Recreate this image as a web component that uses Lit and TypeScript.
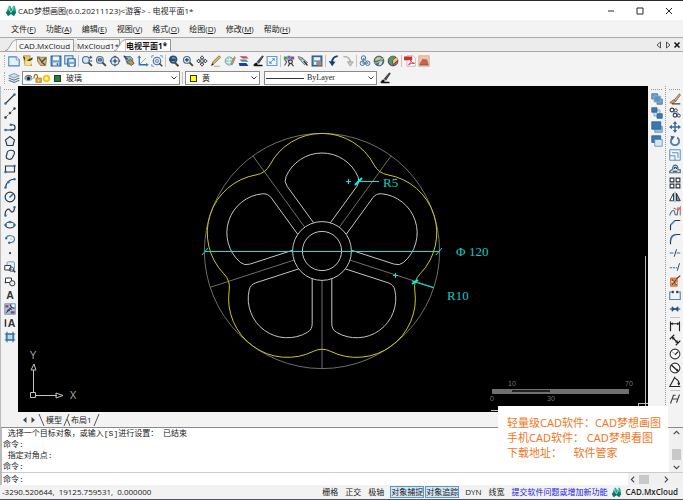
import { LitElement, html, css, svg } from "lit";
import { customElement, property, state } from "lit/decorators.js";
import { classMap } from "lit/directives/class-map.js";

const DARK = "#2b3644";
const BLUE = "#2f6f9f";

const glass = (mark: unknown) => svg`
  <path d="M10 10l4.500 4.500" stroke="#4a4238" stroke-width="2.400"/>
  <circle cx="6.500" cy="6.500" r="4.500" fill="#d5e7f5" stroke="#4d6f91" stroke-width="1.500"/>${mark}`;

const ICONS: Record<string, unknown> = {
  newFile: svg`<path d="M1 2.500h10l4 4v8H1z" fill="#e3f0fa" stroke="#4a86b8" stroke-width="1.400"/><path d="M11 2.500v4h4" fill="#fff" stroke="#4a86b8"/>`,
  open: svg`<path d="M2 1h9l-1 5 3 8H4z" fill="#e8c766" stroke="#b78b2c"/><path d="M1 2l3 1v5zM7 7l7-4v3l-5 3z" fill="#47402f"/><path d="M5 8h8l-2 6H4z" fill="#f7df96"/>`,
  openCloud: svg`<path d="M2 3h12l-1 11H6L2 8z" fill="#d9b671" stroke="#8b6a35"/><path d="M4 4l4 5 5-5M7 9l5 4" stroke="#3b4a58" stroke-width="1.600"/><path d="M1 2l4 0-3 4z" fill="#4e7894"/>`,
  save: svg`<path d="M1.500 1.500h13v13h-13z" fill="#6fa3cc" stroke="#2f6693" stroke-width="1.500"/><path d="M4 2h8v5H4z" fill="#eef6fc"/><path d="M4 10h8v4H4z" fill="#dcebf7"/><path d="M9 11h2v3H9z" fill="#2f6693"/>`,
  saveAs: svg`<path d="M1 1h11v11H1z" fill="#cfe2f2" stroke="#3f78a8" stroke-width="1.400"/><path d="M5 5h10v10H5z" fill="#7fb0d6" stroke="#2f6693" stroke-width="1.300"/><path d="M7 6h6v3H7zM8 12h5v3H8z" fill="#f3f9fd"/>`,
  zoomRealtime: svg`${glass(svg`<path d="M4.500 6.500h4M6.500 4.500v4"/>`)}<path d="M11 3h4M13 1v4M11 8h4" stroke="${DARK}" stroke-width="1.200"/>`,
  zoomWindow: glass(svg`<path d="M4.500 5h4v3h-4z" fill="#7ba6c9" stroke="${DARK}"/>`),
  zoomAll: svg`<circle cx="8" cy="8" r="5.500" fill="#d9e8f4" stroke="#46617b" stroke-width="1.600"/><path d="M5 8h6M8 5v6M8 1v2M8 13v2M1 8h2M13 8h2" stroke="${DARK}" stroke-width="1.500"/>`,
  zoomPrev: svg`<path d="M2 2h8l3 3v7H6z" fill="#8ab0cc" stroke="#46617b"/><path d="M5 9l6 5 4-3-5-5z" fill="#b5925e" stroke="#5d4c31"/><path d="M1 1l5 5" stroke="${DARK}" stroke-width="1.500"/>`,
  ucs: svg`<path d="M3 2v11h11" stroke="${BLUE}" stroke-width="1.700"/><path d="M3 13L12 4" stroke="#7096b5"/><path d="M1 4l2-3 2 3M12 11l3 2-3 2" stroke="${BLUE}"/>`,
  zoomExtents: svg`<path d="M1 4V1h3M12 1h3v3M1 12v3h3" stroke="#5a87ad"/><circle cx="8" cy="8" r="5" fill="#d5e7f5" stroke="#4d6f91" stroke-width="1.500"/><circle cx="8" cy="8" r="2" stroke="#4d6f91"/><path d="M11 11l4 4" stroke="#4a4238" stroke-width="2"/>`,
  zoomBack: svg`<path d="M9 10l5 5" stroke="#4a4238" stroke-width="2.400"/><circle cx="7" cy="6" r="4.500" fill="#6f9abf" stroke="#2b4f70" stroke-width="2"/><path d="M1 6l4-4v3h5v3H5v3z" fill="#234b6d" stroke="none"/>`,
  zoomIn: glass(svg`<path d="M4 6.500h5M6.500 4v5" stroke="${DARK}" stroke-width="1.500"/>`),
  pan: svg`<path d="M8 1l2.500 3H9v3h3V5.500L15 8l-3 2.500V9H9v3h1.500L8 15l-2.500-3H7V9H4v1.500L1 8l3-2.500V7h3V4H5.500z" fill="#fff" stroke="${DARK}" stroke-width="1.200"/>`,
  pencil: svg`<path d="M2 14l2-5 8-8 2 2-8 8z" fill="#e5bb62" stroke="#755624"/><path d="M2 14l1-3 2 2z" fill="#222"/><path d="M5 15h8" stroke="#9a8c70"/>`,
  globeEdit: svg`<circle cx="7" cy="8" r="5.500" fill="#a7d0cf" stroke="#5e98a0"/><path d="M3 6h8M3 10h8M7 3v10" stroke="#e7f5f4"/><path d="M9 12l5-10 1 2-4 9z" fill="#c7a46a" stroke="#8e8070"/>`,
  layers3: svg`<path d="M2 1.500h9l3 3H6z" fill="#e0404a"/><path d="M2 6h9l3 3H5z" fill="#3f8fd0"/><path d="M1 10.500h10l3 4H2z" fill="#1f3f9c"/>`,
  brush: svg`<path d="M7 9l7-8 1 1-6 9z" fill="#555" stroke="#222"/><path d="M1 14c2-1 3-4 5-4l2 2c-1 2-4 2-7 2z" fill="#111"/><path d="M3 14h11" stroke="#111" stroke-width="2"/>`,
  viewport: svg`<path d="M1.500 2h13v12h-13z" fill="#eef7fd" stroke="#5f9dca" stroke-width="1.500"/><path d="M5 11l6-6M8 5h3v3M5 8v3h3" stroke="#3f79a8"/>`,
  find: svg`<path d="M1 2h5v4H1z" fill="#4a9a55"/><path d="M6 1h4v4H6z" fill="#5c70c0"/><path d="M10 2h5v4h-5z" fill="#8d4f93"/><path d="M2 6l3 3-3 5M6 6l4 3" stroke="#704a86" stroke-width="1.500"/><circle cx="10" cy="9" r="2.500" fill="#d8e4ee" stroke="#333" stroke-width="1.500"/><path d="M9 11l-2 4M11 11l3 4" stroke="#333" stroke-width="1.600"/>`,
  filter: svg`<path d="M1 2l6 2 3 5" stroke="#6c7f8f" stroke-width="1.500"/><path d="M4 6l6 7 4-3-6-5z" fill="#c3ced6" stroke="#4f5f6b"/><path d="M9 8l5 6" stroke="#333" stroke-width="1.600"/><path d="M2 3l2 3" stroke="#b08a5a" stroke-width="2"/>`,
  calc: svg`<path d="M1.500 1.500h13v13h-13z" fill="#6a97c0" stroke="#2c4d6c" stroke-width="1.400"/><path d="M4 3h8v4H4z" fill="#e8f2fa"/><path d="M4 9h3v4H4z" fill="#e8f2fa"/><path d="M9 9h5v5H9z" fill="#b98955"/>`,
  undo: svg`<path d="M13 1.500C8 2 5.500 5 5.500 10" stroke="#173f70" stroke-width="2.600"/><path d="M1 8l4.500 7L10 9z" fill="#173f70"/>`,
  redo: svg`<path d="M2 2c6 0 9 3 9 8" stroke="#b0b0b0" stroke-width="2"/><path d="M7 9l4 6 4-6z" fill="#c4c4c4" stroke="#a0a0a0"/>`,
  clouds: svg`<circle cx="6" cy="4" r="3" fill="#dceaf6" stroke="#4d7298" stroke-width="1.300"/><circle cx="4.500" cy="11" r="3" fill="#dceaf6" stroke="#4d7298" stroke-width="1.300"/><circle cx="11.500" cy="11" r="3" fill="#dceaf6" stroke="#4d7298" stroke-width="1.300"/><path d="M6 4l6 7H5z" stroke="#4d7298"/>`,
  globe: svg`<circle cx="8" cy="8" r="6.500" fill="#3d6f9e" stroke="#34454f"/><path d="M3 5c4-4 8-2 9 0l-5 2-4 1z" fill="#c8c98b"/><path d="M9 9l4-1-2 5-4 1z" fill="#d7dfd0"/><path d="M1 11c5 0 10-3 14-8" stroke="#e0c560" stroke-width="1.500"/>`,
  globeDown: svg`<circle cx="8" cy="8" r="6.500" fill="#4b3d62" stroke="#413343"/><path d="M2 5c3-4 8-4 9-2L7 8l1 6c-4 0-6-4-6-9z" fill="#5b9662"/><path d="M14 2L8 7v5l6-5z" fill="#e8d06c"/><path d="M9 13l5-3" stroke="#c4525b" stroke-width="2"/>`,
  pdf: svg`<path d="M4 1h8l3 3v11H4z" fill="#fff" stroke="#b9a6a6"/><path d="M0 2h11v5H0z" fill="#d02c32"/><path d="M6 13c3-2 4-4 3-6 1 3 3 4 5 4-3 0-5 0-8 2z" stroke="#d02c32" stroke-width="1.200"/>`,
  image: svg`<path d="M1 1h14v14H1z" fill="#efc4ae" stroke="#d4a694"/><path d="M2 12l4-7 6 1 2 6z" fill="#c4664c"/><path d="M2 13h12" stroke="#8a4a3c" stroke-width="1.500"/>`,
  layerStack: svg`<path d="M1 5l7-3 7 3-7 3z" fill="#cfe0ee" stroke="#6488a8"/><path d="M1 8l7 3 7-3M1 11l7 3 7-3" stroke="#4c789c" stroke-width="1.500"/>`,
  line: svg`<path d="M2 14L14 2" stroke="${DARK}" stroke-width="1.500"/><path d="M1 13h2v2H1zM13 1h2v2h-2z" fill="${BLUE}" stroke="${BLUE}"/>`,
  xline: svg`<path d="M2 14L14 2" stroke="#666" stroke-width="1.200" stroke-dasharray="5 1"/><path d="M1 13h2v2H1zM7 7h2v2H7zM13 1h2v2h-2z" fill="${DARK}" stroke="${DARK}"/>`,
  polyline: svg`<path d="M2 12h9c5 0 5-7 0-7H9" stroke="${DARK}" stroke-width="1.500"/><path d="M1 11h2v2H1zM9 11h2v2H9zM8 4h2v2H8z" fill="${BLUE}" stroke="${BLUE}"/>`,
  polygon: svg`<path d="M8 2l6 4.500-2 7.500H4L2 6.500z" fill="#e5eef5" stroke="${DARK}" stroke-width="1.500"/>`,
  revcloud: svg`<path d="M4 6c0-5 10-6 10-1 0 3-2 4-3 7-2 3-8 2-8-2 0-2 1-2 1-4z" fill="#f0f4f7" stroke="${DARK}" stroke-width="1.500"/>`,
  rect: svg`<path d="M2 4h12v8H2z" fill="#eef4f9" stroke="${DARK}" stroke-width="1.500"/><path d="M1 11h2v2H1zM13 3h2v2h-2z" fill="${BLUE}" stroke="${BLUE}"/>`,
  arc: svg`<path d="M2 14C3 8 7 3 14 3" stroke="${DARK}" stroke-width="1.500"/><path d="M1 13h2v2H1zM5 6h2v2H5zM13 2h2v2h-2z" fill="${BLUE}" stroke="${BLUE}"/>`,
  circle: svg`<circle cx="8" cy="8" r="6.500" fill="#edf4f9" stroke="${DARK}" stroke-width="1.600"/><path d="M8 8l4-4M7 8h2" stroke="${BLUE}" stroke-width="2"/>`,
  spline: svg`<path d="M2 14C0 8 6 3 8 7s6 3 6-4" stroke="${DARK}" stroke-width="1.500"/><path d="M1 13h2v2H1zM13 2h2v2h-2z" fill="${BLUE}" stroke="${BLUE}"/>`,
  ellipse: svg`<ellipse cx="8" cy="8" rx="6" ry="4" fill="#edf4f9" stroke="${DARK}" stroke-width="1.600"/><path d="M1 7h2v2H1zM13 7h2v2h-2zM7 3h2v2H7z" fill="${BLUE}" stroke="${BLUE}"/>`,
  ellipseArc: svg`<path d="M3 6c2-4 11-3 11 2 0 4-4 5-7 5" stroke="#587e9d" stroke-width="1.600"/><path d="M2 6h2v2H2zM6 12h2v2H6z" fill="${BLUE}" stroke="${BLUE}"/><path d="M8 8h3" stroke="#90aabd"/>`,
  point: svg`<circle cx="8" cy="8" r="1.500" fill="${DARK}"/>`,
  insert: svg`<rect x="4" y="1" width="10" height="11" rx="2" fill="#e1edf6" stroke="#57829f"/><path d="M1 6h8v6H1z" fill="#fff" stroke="${DARK}" stroke-width="1.300"/><circle cx="10" cy="11" r="3" stroke="${DARK}"/><path d="M12 12l3 3" stroke="${DARK}" stroke-width="2"/>`,
  block: svg`<path d="M2 4h8v6H2z" fill="#fff" stroke="${DARK}" stroke-width="1.300"/><circle cx="11" cy="11" r="3.500" fill="#eee" stroke="${DARK}" stroke-width="1.300"/><path d="M1 9h2v2H1z" fill="${DARK}"/>`,
  hatch: svg`<path d="M1 1h14v14H1z" fill="#adc5df" stroke="#637fa1"/><path d="M2 3h4v3H2zM4 9h4v2H4zM9 11h5v3H9z" fill="#963f5b"/><path d="M8 2l2 4 4 1M3 13l5-6 2 2" stroke="#263b55" stroke-width="1.500"/><path d="M11 2h3v3h-3z" fill="#fff"/>`,
  region: svg`<path d="M3 4h10v8H3z" fill="#bcd9ec" stroke="${BLUE}" stroke-width="1.300"/><path d="M4 1v14M12 1v14M1 4h14M1 12h14" stroke="${BLUE}" stroke-width="1.500"/>`,
  front: svg`<path d="M1 1h8v7H1z" fill="#6f9fc8" stroke="#3d6f9e"/><path d="M8 8h7v7H8z" fill="#6f9fc8" stroke="#3d6f9e"/><path d="M4 4h9v8H4z" fill="#5f94c2" stroke="#8fb4d4"/>`,
  back: svg`<path d="M4 4h8v8H4z" fill="#d2e5f5" stroke="#6e98bd"/><path d="M1 1h7v6H1zM8 9h7v6H8z" fill="#3f79aa" stroke="#2f5f8b"/>`,
  above: svg`<path d="M5 7h10v8H5z" fill="#9bc3e3" stroke="#5584ae"/><path d="M1 1h12v10H1z" fill="#3b78ad" stroke="#2b5f8e"/>`,
  below: svg`<path d="M1 1h12v9H1z" fill="#3b78ad" stroke="#2b5f8e"/><path d="M5 6h10v9H5z" fill="#d4e7f6" stroke="#5584ae"/>`,
  erase: svg`<path d="M7 9l7-8 1 2-6 8z" fill="#ddb47a" stroke="#695235"/><path d="M1 13l5-4 3 2-4 3z" fill="#d39a62" stroke="#8d5a35"/><path d="M4 14.500h11" stroke="#333" stroke-width="1.500"/>`,
  copy: svg`<circle cx="4" cy="4" r="2.500" fill="#fff" stroke="${DARK}" stroke-width="1.400"/><circle cx="9" cy="4.500" r="2" stroke="${DARK}" stroke-width="1.200"/><circle cx="8" cy="11" r="2.500" fill="#fff" stroke="${DARK}" stroke-width="1.400"/><circle cx="13" cy="11.500" r="2" stroke="${DARK}" stroke-width="1.200"/><path d="M5 6l4 3M10 6l3 4" stroke="${BLUE}"/>`,
  move: svg`<path d="M8 2v12M2 8h12" stroke="#3c6c9c" stroke-width="2"/><path d="M8 0l3 4H5zM8 16l3-4H5zM0 8l4-3v6zM16 8l-4-3v6z" fill="#3c6c9c"/>`,
  rotate: svg`<path d="M5 3.500a5.500 5.500 0 1 0 6 0" stroke="#4d7fa8" stroke-width="2.400"/><path d="M2 1l6 1-4 5z" fill="#3d678b"/>`,
  scale: svg`<path d="M1 1h14v14H1z" fill="#edf5fb" stroke="#5a91bd" stroke-width="1.300"/><path d="M1 9h7v6M4 5h8v7" stroke="#5a91bd" stroke-width="1.300"/>`,
  offset: svg`<path d="M1 13h14V9h-3C13 1 4 1 5 8L1 11z" fill="#d9e7f1" stroke="#426b8b" stroke-width="1.600"/><path d="M5 11h6M7 8c0-3 3-3 3 0" stroke="${DARK}" stroke-width="1.400"/>`,
  array: svg`<path d="M1.500 1.500h5v5h-5zM9.500 1.500h5v5h-5zM1.500 9.500h5v5h-5zM9.500 9.500h5v5h-5z" fill="#fff" stroke="${DARK}" stroke-width="1.500"/>`,
  mirror: svg`<path d="M6 3v10H1z" fill="#fff" stroke="${DARK}" stroke-width="1.300"/><path d="M10 3v10h5z" fill="#7897ad" stroke="${DARK}" stroke-width="1.300"/><path d="M8 1v14" stroke="${BLUE}"/>`,
  stretch: svg`<path d="M1 14c1-5 4-8 6-6 2 3-1 6 4 5l1-10" stroke="#4e6fa3" stroke-width="1.500"/><path d="M6 4l4 2M12 7l3-4v11" stroke="#d4604e" stroke-width="1.500"/>`,
  chamfer: svg`<path d="M2 15V8l6-6h7" stroke="${DARK}" stroke-width="1.500"/><path d="M2 8l6-6" stroke="#4e93c4" stroke-width="2.200"/>`,
  fillet: svg`<path d="M2 15v-4C2 5 6 2 10 2h5" stroke="${DARK}" stroke-width="1.500"/><path d="M2 11C2 5 6 2 10 2" stroke="#4277a2" stroke-width="2.200"/>`,
  trim: svg`<path d="M1 8h6M10 8h5" stroke="#3575a9" stroke-width="1.500" stroke-dasharray="5 1"/><path d="M7 13l3-10" stroke="${DARK}" stroke-width="1.200"/>`,
  extend: svg`<path d="M1 9h10" stroke="#3575a9" stroke-width="1.500" stroke-dasharray="3 1"/><path d="M11 13l3-10" stroke="${DARK}" stroke-width="1.200"/>`,
  explode: svg`<path d="M2 4h9v11H2z" fill="#e08a55" stroke="#c06a40"/><path d="M4 6l6 7M10 6l-6 7M10 5l5-4" stroke="#6e3426" stroke-width="1.400"/><path d="M3 8h3v2H3zM9 10h2v2H9z" fill="#ffd59b"/>`,
  breakPt: svg`<path d="M5 4H1v10h14V4h-4" stroke="#4e86b3" stroke-width="1.500"/><path d="M4 3h2v2H4zM10 3h2v2h-2z" fill="${DARK}" stroke="${DARK}"/>`,
  join: svg`<path d="M1 8h14" stroke="#285680" stroke-width="1.500"/><path d="M4 5l4 3-4 3zM12 5L8 8l4 3z" fill="#285680" stroke="#285680"/>`,
  dimLinear: svg`<path d="M2 2v13M14 2v13M2 5h12" stroke="#222" stroke-width="1.500"/><path d="M2 5l3-2v4zM14 5l-3-2v4z" fill="#222"/>`,
  dimAligned: svg`<path d="M4 4l8 8M1 7l6-6M9 15l6-6" stroke="#222" stroke-width="1.500"/><path d="M4 4l4 1-3 3zM12 12l-4-1 3-3z" fill="#222"/>`,
  dimRadius: svg`<circle cx="8" cy="8" r="6.500" fill="#fff" stroke="#333" stroke-width="1.400"/><path d="M8 9l4-4" stroke="#222" stroke-width="1.500"/><path d="M4 5l4 3" stroke="#888"/>`,
  dimDiameter: svg`<circle cx="8" cy="8" r="6.500" fill="#fff" stroke="#333" stroke-width="1.400"/><path d="M3 4l9 8" stroke="#222" stroke-width="2"/><path d="M13 13l-4-1 3-3z" fill="#222"/>`,
  dimAngular: svg`<path d="M8 1L1 14h14M8 3c4 2 6 5 5 9" stroke="#222" stroke-width="1.500"/><path d="M11 9l2 4 2-4z" fill="#222"/>`,
  dimEdit: svg`<path d="M2 14L6 3M10 13l4-11M4 8h8M5 3h4" stroke="#444" stroke-width="1.500"/>`,
  eye: svg`<path d="M1 9c3-7 11-7 14 0-4 4-10 4-14 0z" fill="#9fb8ca" stroke="#5d7485"/><circle cx="8" cy="8" r="3" fill="#1b2b3a"/><path d="M1 6c4-5 10-4 13-1" stroke="#333" stroke-width="1.500"/>`,
  lock: svg`<path d="M2 8V4c0-4 6-4 6 0v4" stroke="#8c6a2b" stroke-width="2"/><path d="M5 7h10v8H5z" fill="#e5a63d" stroke="#9b6922"/><path d="M9 10h2v3H9z" fill="#fff0b3"/>`,
  sun: svg`<circle cx="8" cy="8" r="5" fill="#fff0a0" stroke="#ffc000" stroke-width="3"/>`,
  logo: svg`<path d="M2 9l3-8h2l2 4 2-4h2l2 8-3 2H5z" fill="#21a98f"/><path d="M1 10l5-4 2 3 2-3 5 4-3 5-4-3-4 3z" fill="#0b7764"/><path d="M5 2l1 5 2 3 2-3 1-5" stroke="#d6f6ef"/>`,
  min: svg`<path d="M4 8h8" stroke="#222" stroke-width="1.300"/>`,
  max: svg`<path d="M4 4h8v8H4z" stroke="#222" stroke-width="1.300"/>`,
  close: svg`<path d="M4 4l8 8M12 4l-8 8" stroke="#222" stroke-width="1.300"/>`,
  closeBold: svg`<path d="M3 3l10 10M13 3L3 13" stroke="#111" stroke-width="3"/>`,
  triLeft: svg`<path d="M11 2v12L4 8z" stroke="#222" stroke-width="1.500"/>`,
  triRight: svg`<path d="M5 2v12l7-6z" stroke="#222" stroke-width="1.500"/>`,
  solidLeft: svg`<path d="M11 2v12L4 8z" fill="#444"/>`,
  solidRight: svg`<path d="M5 2v12l7-6z" fill="#444"/>`,
  up: svg`<path d="M3 11l5-5 5 5" stroke="#444" stroke-width="2"/>`,
  down: svg`<path d="M3 5l5 5 5-5" stroke="#444" stroke-width="2"/>`,
  left: svg`<path d="M11 3L6 8l5 5" stroke="#444" stroke-width="2"/>`,
  right: svg`<path d="M5 3l5 5-5 5" stroke="#444" stroke-width="2"/>`,
};

@customElement("cad-icon")
class CadIcon extends LitElement {
  @property() name = "";
  static styles = css`
    :host { display: block; width: 12px; height: 12px; flex: none; }
    svg { display: block; width: 100%; height: 100%; fill: none; }
    .letter { font-family: "Liberation Sans", sans-serif; font-weight: bold; font-size: 14px; fill: #333; }
  `;
  render() {
    if (this.name === "text") return html`<svg viewBox="0 0 16 16"><text class="letter" x="8" y="13" text-anchor="middle">A</text></svg>`;
    if (this.name === "mtext") return html`<svg viewBox="0 0 16 16"><path d="M2 3v10" stroke="#333" stroke-width="2"/><text class="letter" x="10" y="13" text-anchor="middle">A</text></svg>`;
    return html`<svg viewBox="0 0 16 16">${ICONS[this.name]}</svg>`;
  }
}

/* The wheel is described in drawing units; one unit is 1.96 px on screen. */
const UNIT = 1.96;
const CX = 304;
const CY = 165;

/* Point given along a spoke (degrees) and to the side of it. */
function at(deg: number, along: number, side = 0): [number, number] {
  const a = (deg * Math.PI) / 180;
  return [
    CX + UNIT * (along * Math.cos(a) - side * Math.sin(a)),
    CY + UNIT * (along * Math.sin(a) + side * Math.cos(a)),
  ];
}
const p = (q: [number, number]) => `${q[0].toFixed(2)} ${q[1].toFixed(2)}`;
const arcTo = (r: number, sweep: number, q: [number, number]) =>
  `A${r * UNIT} ${r * UNIT} 0 0 ${sweep} ${p(q)}`;

const SPOKES = [0, 1, 2, 3, 4].map((i) => -54 + i * 72);
const COS = 30 * Math.cos(Math.PI / 5);
const SIN = 30 * Math.sin(Math.PI / 5);

/* Five R30 lobes joined by R10 fillets on the spokes. */
function rimPath() {
  const c = Math.sqrt(40 * 40 - SIN * SIN) + COS;
  const along = COS + (c - COS) * 0.75;
  const side = SIN * 0.25;
  let d = `M${p(at(SPOKES[0], along, side))}`;
  for (let i = 0; i < 5; i++) {
    const next = SPOKES[(i + 1) % 5];
    d += arcTo(30, 1, at(next, along, -side)) + arcTo(10, 0, at(next, along, side));
  }
  return d + "Z";
}

/* Opening between two spokes: straight sides, R5 fillets, R20 outer arc. */
function pocketPath(from: number) {
  const to = from + 72;
  const hub = Math.sqrt(15 * 15 - 25);
  const dy = SIN - 10;
  const dx = Math.sqrt(225 - dy * dy);
  const bend = COS + dx;
  const tAlong = COS + (dx * 20) / 15;
  const tSide = SIN - (dy * 20) / 15;
  return (
    `M${p(at(from, hub, 5))}L${p(at(from, bend, 5))}` +
    arcTo(5, 1, at(from, tAlong, tSide)) +
    arcTo(20, 1, at(to, tAlong, -tSide)) +
    arcTo(5, 1, at(to, bend, -5)) +
    `L${p(at(to, hub, -5))}`
  );
}

@customElement("cad-canvas")
class CadCanvas extends LitElement {
  static styles = css`
    :host { display: block; position: relative; overflow: hidden; background: #000; min-height: 326px; min-width: 0; }
    svg { fill: none; }
    .plan { position: absolute; inset: 0; width: 100%; height: 100%; }
    .ucs { position: absolute; left: 10px; bottom: 8px; width: 54px; height: 56px; }
    .scale { position: absolute; right: 12px; bottom: 9px; width: 150px; height: 26px; }
    .cursor { position: absolute; right: 0; bottom: 0; width: 160px; height: 160px; }
    .rim { stroke: #c8c81e; }
    .pocket { stroke: #c4c4c4; }
    .axis { stroke: #6e6e6e; }
    .dim { stroke: #00e8e0; }
    .tick { stroke: #00f0e8; stroke-width: 2; }
    .dimText { fill: #16c8c0; font: 13px "Liberation Serif", serif; }
    .faint { fill: #777; font: 7px "Liberation Sans", sans-serif; text-anchor: middle; }
    .ucsLine { stroke: #c4c4c4; }
    .ucsText { fill: #a8a8a8; font: 10px "Liberation Sans", sans-serif; text-anchor: middle; }
  `;
  render() {
    return html`
      <svg class="plan" viewBox="0 0 630 326" role="img" aria-label="电视平面1">
        <circle class="axis" cx=${CX} cy=${CY} r=${60 * UNIT} />
        ${SPOKES.map((s) => svg`<path class="axis" d="M${p(at(s, 15))}L${p(at(s, 60))}"/>`)}
        <path class="rim" d=${rimPath()} />
        ${SPOKES.map((s) => svg`<path class="pocket" d=${pocketPath(s)} />`)}
        <circle class="pocket" cx=${CX} cy=${CY} r=${15 * UNIT} />
        <circle class="pocket" cx=${CX} cy=${CY} r=${10 * UNIT} />
        <path class="dim" d="M187 165.500H421" />
        <path class="dim" d="M184 169l6-7M418 169l6-7" />
        <path class="dim" d="M341 95.500h20M328 95.500h5M330.500 93v5" />
        <path class="dim" d="M375 189.500h5M377.500 187v5M394 195l22 7" />
        <path class="tick" d="M337 99l7-7M394 198l6-4" />
        <text class="dimText" x="365" y="101">R5</text>
        <text class="dimText" x="438" y="170">Φ</text>
        <text class="dimText" x="451" y="170">120</text>
        <text class="dimText" x="429" y="214">R10</text>
      </svg>
      <svg class="ucs" viewBox="0 0 54 56">
        <path class="ucsLine" d="M2.500 44.500h5v5h-5zM5.500 44V22M8 47.500h21M3 22h5l-2-6zM28 45v5l7-2.500z" />
        <text class="ucsText" x="5" y="11">Y</text>
        <text class="ucsText" x="45" y="51">X</text>
      </svg>
      <svg class="scale" viewBox="0 0 150 26">
        <path fill="#707070" d="M6 12h137v5H6z" />
        <path fill="#222" d="M26 13h38v2H26z" />
        <text class="faint" x="26" y="9">10</text>
        <text class="faint" x="143" y="9">70</text>
        <text class="faint" x="6" y="24">0</text>
        <text class="faint" x="65" y="24">30</text>
      </svg>
      <svg class="cursor" viewBox="0 0 160 160">
        <path stroke="#bbb" d="M157.500 4v156M150 151.500h10M150.500 151v9M3 158.500h8" />
      </svg>
    `;
  }
}

const MENUS = [["文件", "F"], ["功能", "A"], ["编辑", "E"], ["视图", "V"], ["格式", "O"], ["绘图", "D"], ["修改", "M"], ["帮助", "H"]];
const MAIN_TOOLS = "newFile open openCloud save saveAs | zoomRealtime zoomWindow zoomAll zoomPrev ucs zoomExtents | zoomBack zoomIn pan pencil globeEdit layers3 brush viewport | find filter calc | undo redo | clouds globe globeDown | pdf image".split(" ");
const DRAW_TOOLS = "line xline polyline polygon revcloud rect arc circle spline ellipse ellipseArc point insert block text hatch mtext region".split(" ");
const ORDER_TOOLS = "front back above below".split(" ");
const MODIFY_TOOLS = "erase copy move rotate scale offset array mirror stretch chamfer fillet trim extend explode breakPt join | dimLinear dimAligned dimRadius dimDiameter dimAngular | dimEdit".split(" ");

@customElement("app-root")
class AppRoot extends LitElement {
  @state() private tab = 2;
  @state() private modes: Record<string, boolean> = { 对象捕捉: true, 对象追踪: true };

  static styles = css`
    :host {
      display: flex; flex-direction: column; min-height: 100vh; box-sizing: border-box;
      background: #f3f3f3; color: #222; border-top: 1px solid #2d2a2c; border-bottom: 1px solid #55555c;
      font: 8px/12px "Open Sans", "Noto Sans CJK SC", sans-serif;
    }
    button, select, input { font: inherit; color: inherit; border: 0; background: none; padding: 0; margin: 0; outline: 0; border-radius: 0; }
    button { display: flex; align-items: center; white-space: nowrap; }
    .title { display: flex; align-items: center; height: 19px; background: #fff; padding: 0 8px 0 5px; gap: 1px; }
    .name { flex: 1; font-size: 8px; white-space: nowrap; font-weight: normal; margin: 0; }
    .winButtons { display: flex; gap: 17px; }
    .menu { display: flex; align-items: center; height: 17px; padding: 0 11px; gap: 10px; }
    .menu u { text-underline-offset: 1px; }
    .tabs { display: flex; align-items: flex-end; height: 15px; box-sizing: border-box; border-top: 1px solid #aaa; border-bottom: 1px solid #a8a8a8; background: #ececec; padding: 0 2px 0 5px; }
    .tab { height: 12px; position: relative; }
    .tab svg { width: 12px; height: 12px; fill: #f6f6f6; stroke: #999; flex: none; }
    .tab span { height: 12px; line-height: 12px; box-sizing: border-box; border-top: 1px solid #999; border-right: 1px solid #999; padding: 0 3px 0 2px; background: #f6f6f6; }
    .tab.plain svg { width: 3px; }
    .tab.plain span { padding: 0; }
    .tab.on span { padding-left: 0; background: #fff; }
    .tab.on svg { fill: #fff; margin-left: -6px; }
    .on { font-weight: bold; color: #111; }
    .grow { flex: 1; }
    .tabNav { display: flex; height: 13px; align-items: center; gap: 1px; }
    .tabNav cad-icon { width: 8px; height: 8px; }
    .bar { display: flex; align-items: center; padding: 0 4px; gap: 2px; }
    .main { height: 18px; }
    .props { height: 16px; }
    .grip { width: 1px; height: 12px; border-left: 1px dotted #aaa; }
    .sep { width: 1px; height: 12px; background: #c4c4c4; flex: none; }
    .combo { position: relative; height: 14px; display: block; }
    .combo select { appearance: none; width: 100%; height: 14px; box-sizing: border-box; background: #fff; border: 1px solid #8a8a8a; padding: 0 12px 0 43px; display: block; line-height: 12px; }
    .combo .arrow { position: absolute; right: 2px; top: 3px; width: 8px; height: 8px; pointer-events: none; }
    .marks { position: absolute; left: 2px; top: 2px; display: flex; align-items: center; gap: 0; height: 10px; pointer-events: none; }
    .marks cad-icon { width: 9px; height: 9px; }
    .chip { width: 5px; height: 5px; border: 1px solid #333; margin-left: 3px; }
    .green { background: #128a2b; }
    .yellow { background: #ff0; }
    .layer { width: 158px; }
    .color { width: 75px; }
    .combo.color select { padding-left: 16px; }
    .ltype { width: 113px; margin-left: 2px; }
    .combo.ltype select { font-family: "Liberation Serif", serif; padding-left: 42px; }
    .stroke { width: 38px; height: 1px; background: #333; }
    .work { flex: 1; display: grid; grid-template-columns: 18px minmax(0, 1fr) 17px 18px; }
    .rail { display: flex; flex-direction: column; align-items: center; gap: 2px; padding-top: 3px; border-left: 1px solid #bbb; }
    .rail::before { content: ""; width: 11px; border-top: 1px dotted #999; margin-bottom: 1px; }
    .rail .sep { width: 10px; height: 1px; }
    .rail + .rail { border-left: 1px dotted #999; }
    .order { border-left: 0; }
    .center { display: flex; flex-direction: column; min-width: 0; }
    cad-canvas { flex: 1; }
    .sheets { display: flex; align-items: center; height: 15px; padding-left: 3px; }
    .sheets cad-icon { width: 8px; height: 8px; }
    .slash { width: 7px; height: 12px; stroke: #555; fill: none; margin: 0 1px; }
    .console { position: relative; border-top: 1px solid #8a8a8a; border-left: 2px solid #bbb; background: #fff; font-family: "Liberation Mono", "Noto Sans CJK SC", monospace; line-height: 11px; }
    .logRow { display: flex; justify-content: space-between; border-bottom: 1px solid #ccc; }
    .log { margin: 0; font: inherit; white-space: pre; padding-left: 1px; }
    .vScroll { display: flex; flex-direction: column; justify-content: space-between; align-items: center; width: 14px; background: #f0f0f0; }
    .vScroll cad-icon, .hScroll cad-icon { width: 9px; height: 9px; }
    .vThumb { width: 9px; height: 11px; background: #c8c8c8; margin-top: 8px; }
    .entry { display: flex; height: 12px; align-items: center; padding-left: 1px; }
    .entry input { flex: 1; min-width: 0; }
    .hScroll { display: flex; width: 55px; justify-content: space-between; align-items: center; background: #f0f0f0; height: 12px; padding-right: 12px; box-sizing: border-box; }
    .hThumb { width: 10px; height: 9px; background: #c8c8c8; margin-right: 12px; }
    .note { position: absolute; right: 15px; bottom: 14px; width: 170px; height: 65px; box-sizing: border-box; padding: 9px 0 0 9px; background: #fff; color: #f07828; font: 11px/15px "Noto Sans", "Noto Sans CJK SC", sans-serif; white-space: pre; }
    .note p { margin: 0; }
    .status { display: flex; align-items: center; height: 14px; padding: 0 5px 0 2px; background: #f2f2f2; white-space: nowrap; }
    .coords { flex: 1; white-space: pre; }
    .modes { display: flex; gap: 5px; margin-right: 6px; }
    .mode { height: 12px; box-sizing: border-box; border: 1px solid transparent; }
    .active { background: #d3e6f5; border-color: #5c9bc9; }
    .active + .active { margin-left: -4px; }
    a { color: #2020e0; text-decoration: none; margin-right: 3px; }
    .brand { display: flex; align-items: center; gap: 4px; font-weight: 600; }
    .brand cad-icon { width: 11px; height: 11px; }
  `;

  private tools(names: string[]) {
    return names.map((n) => (n === "|" ? html`<span class="sep"></span>` : html`<button aria-label=${n}><cad-icon name=${n}></cad-icon></button>`));
  }

  private slant() {
    return html`<svg viewBox="0 0 12 12"><path d="M0 12C5 11 6 .5 12 .5V13z" /></svg>`;
  }

  render() {
    return html`
      <header class="title">
        <cad-icon name="logo"></cad-icon>
        <h1 class="name">CAD梦想画图(6.0.20211123)&lt;游客&gt; - 电视平面1*</h1>
        <div class="winButtons">
          <button aria-label="最小化"><cad-icon name="min"></cad-icon></button>
          <button aria-label="最大化"><cad-icon name="max"></cad-icon></button>
          <button aria-label="关闭"><cad-icon name="close"></cad-icon></button>
        </div>
      </header>
      <nav class="menu">${MENUS.map(([t, k]) => html`<button>${t}(<u>${k}</u>)</button>`)}</nav>
      <div class="tabs">
        ${["CAD.MxCloud", "MxCloud1*", "电视平面1*"].map(
          (t, i) => html`<button class=${classMap({ tab: true, on: this.tab === i, plain: i === 1 && this.tab !== 1 })} @click=${() => (this.tab = i)}>${this.slant()}<span>${t}</span></button>`
        )}
        <span class="grow"></span>
        <div class="tabNav">
          <button aria-label="上一个"><cad-icon name="triLeft"></cad-icon></button>
          <button aria-label="下一个"><cad-icon name="triRight"></cad-icon></button>
          <button aria-label="关闭标签"><cad-icon name="closeBold"></cad-icon></button>
        </div>
      </div>
      <div class="bar main"><span class="grip"></span>${this.tools(MAIN_TOOLS)}</div>
      <div class="bar props">
        <span class="grip"></span>
        ${this.tools(["layerStack"])}
        <label class="combo layer">
          <select aria-label="图层"><option>玻璃</option></select>
          <span class="marks"><cad-icon name="eye"></cad-icon><cad-icon name="lock"></cad-icon><cad-icon name="sun"></cad-icon><span class="chip green"></span></span>
          <cad-icon class="arrow" name="down"></cad-icon>
        </label>
        <span class="sep"></span>
        <label class="combo color">
          <select aria-label="颜色"><option>黄</option></select>
          <span class="marks"><span class="chip yellow"></span></span>
          <cad-icon class="arrow" name="down"></cad-icon>
        </label>
        <label class="combo ltype">
          <select aria-label="线型"><option>ByLayer</option></select>
          <span class="marks"><span class="stroke"></span></span>
          <cad-icon class="arrow" name="down"></cad-icon>
        </label>
        ${this.tools(["brush"])}
      </div>
      <main class="work">
        <div class="rail">${this.tools(DRAW_TOOLS)}</div>
        <div class="center">
          <cad-canvas></cad-canvas>
          <div class="sheets">
            <button aria-label="上一页"><cad-icon name="solidLeft"></cad-icon></button>
            <button aria-label="下一页"><cad-icon name="solidRight"></cad-icon></button>
            <svg class="slash" viewBox="0 0 7 12"><path d="M1 0l5 12" /></svg>
            <button>模型</button>
            <svg class="slash" viewBox="0 0 7 12"><path d="M6 0L1 12M4 5l3 7" /></svg>
            <button>布局1</button>
            <svg class="slash" viewBox="0 0 7 12"><path d="M6 0L1 12" /></svg>
          </div>
        </div>
        <div class="rail order">${this.tools(ORDER_TOOLS)}</div>
        <div class="rail">${this.tools(MODIFY_TOOLS)}</div>
      </main>
      <section class="console">
        <div class="logRow">
          <pre class="log">${" 选择一个目标对象，或输入[S]进行设置： 已结束\n命令:\n 指定对角点:\n命令:"}</pre>
          <div class="vScroll">
            <button aria-label="向上"><cad-icon name="up"></cad-icon></button>
            <span class="vThumb"></span>
            <button aria-label="向下"><cad-icon name="down"></cad-icon></button>
          </div>
        </div>
        <div class="entry">
          <label for="cmd">命令:</label><input id="cmd" />
          <div class="hScroll">
            <button aria-label="向左"><cad-icon name="left"></cad-icon></button>
            <span class="hThumb"></span>
            <button aria-label="向右"><cad-icon name="right"></cad-icon></button>
          </div>
        </div>
        <div class="note"><p>轻量级CAD软件：CAD梦想画图</p><p>手机CAD软件： CAD梦想看图</p><p>下载地址：    软件管家</p></div>
      </section>
      <footer class="status">
        <span class="coords">-3290.520644,  19125.759531,  0.000000</span>
        <div class="modes">
          ${["栅格", "正交", "极轴", "对象捕捉", "对象追踪", "DYN", "线宽"].map(
            (m) => html`<button class=${classMap({ mode: true, active: !!this.modes[m] })} @click=${() => (this.modes = { ...this.modes, [m]: !this.modes[m] })}>${m}</button>`
          )}
        </div>
        <a href="#feedback">提交软件问题或增加新功能</a>
        <span class="brand"><cad-icon name="logo"></cad-icon>CAD.MxCloud</span>
      </footer>
    `;
  }
}
